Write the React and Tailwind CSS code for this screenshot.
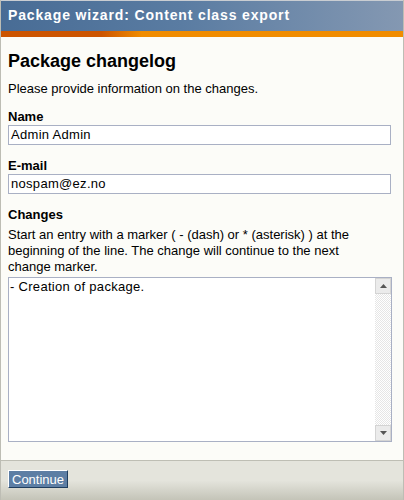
import React from 'react';

const Field = ({ label, value, top }) => (
  <div className={top}>
    <div className="font-bold text-[13px] leading-[16px]">{label}</div>
    <div className="h-[20px] w-[383px] border border-[#a9b0c4] bg-white px-[2px] text-[13px] leading-[18px] tracking-[0.3px] text-black">
      {value}
    </div>
  </div>
);

const App = () => {
  return (
    <div className="w-[404px] h-[500px] flex flex-col bg-[#fcfcf8] border-x border-[#bdbdb4] font-['Liberation_Sans',Arial,sans-serif] text-black">
      {/* title bar */}
      <div className="h-[31px] border-t border-[#c9cdd2] bg-[linear-gradient(to_right,#486c95,#5a7ca2_45%,#8498b2)] px-[7px] pt-[5px]">
        <h2 className="text-[14px] font-bold leading-[18px] tracking-[0.85px] text-white">Package wizard: Content class export</h2>
      </div>
      <div className="h-[6px] bg-[linear-gradient(to_right,#cc5400_25%,#f08c00_35%,#f08c00)]" />

      <div className="flex-1 px-[7px] pt-[13px]">
        <h1 className="text-[18px] font-bold leading-[22px]">Package changelog</h1>
        <p className="mt-[9px] text-[13px] leading-[16px]">Please provide information on the changes.</p>

        <Field top="mt-[12px]" label="Name" value="Admin Admin" />
        <Field top="mt-[13px]" label="E-mail" value="nospam@ez.no" />

        <div className="mt-[13px] font-bold text-[13px] leading-[16px]">Changes</div>
        <p className="mt-[4px] w-[360px] text-[13px] leading-[16px]">
          Start an entry with a marker ( - (dash) or * (asterisk) ) at the beginning of the line. The change will continue to the next change marker.
        </p>
        <div className="mt-[2px] flex h-[165px] w-[384px] border border-[#a9b0c4] bg-white">
          <div className="flex-1 px-[1px] pt-[1px] text-[13px] leading-[16px] tracking-[0.3px]">- Creation of package.</div>
          <div className="flex w-[16px] flex-col">
            <div className="flex h-[16px] items-center justify-center border border-[#d4d4d4] bg-[#ebebeb]">
              <svg width="7" height="4" viewBox="0 0 7 4"><path d="M3.5 0L7 4H0z" fill="#555" /></svg>
            </div>
            <div className="flex-1 bg-[repeating-conic-gradient(#e6e6e6_0_25%,#ffffff_0_50%)] bg-[length:2px_2px]" />
            <div className="flex h-[16px] items-center justify-center border border-[#d4d4d4] bg-[#ebebeb]">
              <svg width="7" height="4" viewBox="0 0 7 4"><path d="M0 0H7L3.5 4z" fill="#555" /></svg>
            </div>
          </div>
        </div>
      </div>

      {/* footer */}
      <div className="h-[40px] border-t border-[#bebeb4] bg-[linear-gradient(to_bottom,#e4e4dc_50%,#c4c4b8)] px-[7px] pt-[9px]">
        <button className="block h-[18px] border border-t-white border-l-white border-r-[#1f3d5e] border-b-[#1f3d5e] bg-[#5d7ea4] px-[3px] text-[13px] leading-[15px] text-white">
          Continue
        </button>
      </div>
    </div>
  );
};

export default App;
